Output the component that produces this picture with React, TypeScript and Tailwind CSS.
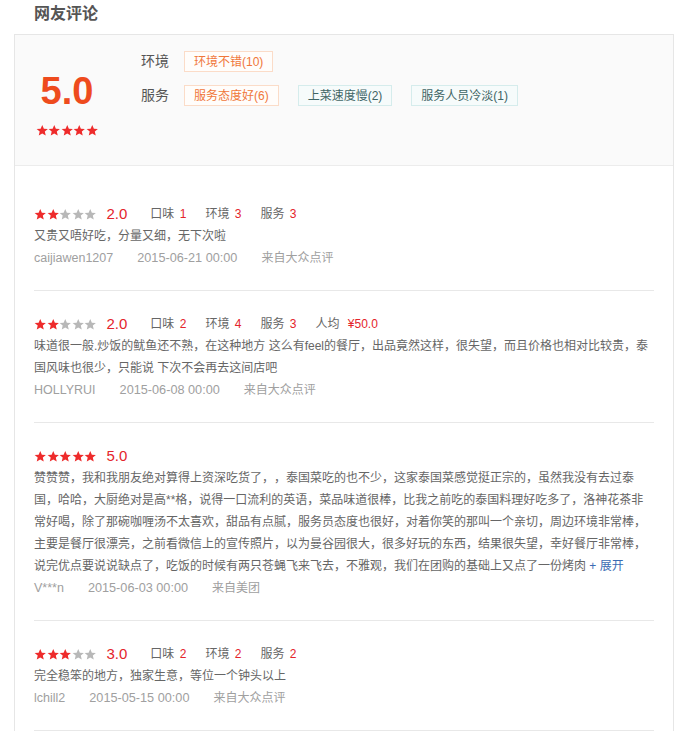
import React from 'react'

type Review = {
  stars: number
  scores: [string, string][]
  price?: string
  text: string
  user: string
  date: string
  source: string
  more?: boolean
}

const reviews: Review[] = [
  {
    stars: 2,
    scores: [['口味', '1'], ['环境', '3'], ['服务', '3']],
    text: '又贵又唔好吃，分量又细，无下次啦',
    user: 'caijiawen1207',
    date: '2015-06-21 00:00',
    source: '来自大众点评',
  },
  {
    stars: 2,
    scores: [['口味', '2'], ['环境', '4'], ['服务', '3']],
    price: '¥50.0',
    text: '味道很一般.炒饭的鱿鱼还不熟，在这种地方 这么有feel的餐厅，出品竟然这样，很失望，而且价格也相对比较贵，泰国风味也很少，只能说 下次不会再去这间店吧',
    user: 'HOLLYRUI',
    date: '2015-06-08 00:00',
    source: '来自大众点评',
  },
  {
    stars: 5,
    scores: [],
    text: '赞赞赞，我和我朋友绝对算得上资深吃货了，，泰国菜吃的也不少，这家泰国菜感觉挺正宗的，虽然我没有去过泰国，哈哈，大厨绝对是高**格，说得一口流利的英语，菜品味道很棒，比我之前吃的泰国料理好吃多了，洛神花茶非常好喝，除了那碗咖喱汤不太喜欢，甜品有点腻，服务员态度也很好，对着你笑的那叫一个亲切，周边环境非常棒，主要是餐厅很漂亮，之前看微信上的宣传照片，以为曼谷园很大，很多好玩的东西，结果很失望，幸好餐厅非常棒，说完优点要说说缺点了，吃饭的时候有两只苍蝇飞来飞去，不雅观，我们在团购的基础上又点了一份烤肉',
    user: 'V***n',
    date: '2015-06-03 00:00',
    source: '来自美团',
    more: true,
  },
  {
    stars: 3,
    scores: [['口味', '2'], ['环境', '2'], ['服务', '2']],
    text: '完全稳笨的地方，独家生意，等位一个钟头以上',
    user: 'lchill2',
    date: '2015-05-15 00:00',
    source: '来自大众点评',
  },
]

const Star = ({ on, size }: { on: boolean; size: number }) => (
  <svg width={size} height={size} viewBox="0 0 24 24" className="block">
    <path
      d="M12 1.8l3.1 7.1 7.7.6-5.9 5 1.8 7.6L12 18l-6.7 4.1 1.8-7.6-5.9-5 7.7-.6z"
      fill={on ? '#ee2b2b' : '#b8b8b8'}
    />
  </svg>
)

const Stars = ({ n, size }: { n: number; size: number }) => (
  <div className="flex">
    {[0, 1, 2, 3, 4].map((i) => (
      <Star key={i} on={i < n} size={size} />
    ))}
  </div>
)

const OrangeTag = ({ children }: { children: React.ReactNode }) => (
  <span className="inline-flex h-[21px] items-center border border-[#fbdcc8] bg-[#fffdfb] px-[9px] text-[12px] text-[#f0773a]">
    {children}
  </span>
)

const TealTag = ({ children }: { children: React.ReactNode }) => (
  <span className="inline-flex h-[21px] items-center border border-[#d5ecec] bg-[#f6fbfb] px-[9px] text-[12px] text-[#3f6565]">
    {children}
  </span>
)

export default function App() {
  return (
    <div
      className="min-h-[742px] bg-white [text-spacing-trim:space-all]"
      style={{ fontFamily: '"Liberation Sans", "Noto Sans CJK SC", sans-serif' }}
    >
      <h2 className="pl-[34px] pt-[4px] text-[16px] font-bold leading-[20px] text-[#555]">网友评论</h2>
      <div className="ml-[14px] mt-[10px] w-[660px] border-x border-t border-[#e6e6e6]">
        {/* summary */}
        <div className="flex h-[131px] border-b border-[#ececec] bg-[#fafafa]">
          <div className="flex w-[104px] flex-col items-center pt-[34px]">
            <div className="text-[38px] font-bold leading-[44px] text-[#ee4b1d]">5.0</div>
            <div className="mt-[11px]">
              <Stars n={5} size={12.5} />
            </div>
          </div>
          <div className="ml-[22px] flex flex-col gap-[13px] pt-[16px]">
            <div className="flex items-center">
              <span className="w-[43px] text-[14px] text-[#555]">环境</span>
              <OrangeTag>环境不错(10)</OrangeTag>
            </div>
            <div className="flex items-center">
              <span className="w-[43px] text-[14px] text-[#555]">服务</span>
              <div className="flex gap-[19px]">
                <OrangeTag>服务态度好(6)</OrangeTag>
                <TealTag>上菜速度慢(2)</TealTag>
                <TealTag>服务人员冷淡(1)</TealTag>
              </div>
            </div>
          </div>
        </div>

        {/* list */}
        <div className="pl-[19px] pt-[15px]">
          {reviews.map((r, i) => (
            <div key={i} className="w-[620px] border-b border-[#e8e8e8] pb-[21px] pt-[22px]">
              <div className="flex h-[22px] items-center text-[12px]">
                <Stars n={r.stars} size={12.5} />
                <span className="ml-[10px] text-[15px] text-[#e4242b]">{r.stars}.0</span>
                <div className="ml-[23px] flex gap-[19px] text-[#666]">
                  {r.scores.map(([k, v]) => (
                    <span key={k}>
                      {k} <span className="ml-[2px] text-[#e4242b]">{v}</span>
                    </span>
                  ))}
                  {r.price && (
                    <span>
                      人均 <span className="ml-[5px] text-[#e4242b]">{r.price}</span>
                    </span>
                  )}
                </div>
              </div>
              <p className="text-[12px] leading-[22px] text-[#666]">
                {r.text}
                {r.more && <span className="text-[#3b6bb3]"> + 展开</span>}
              </p>
              <div className="flex gap-[24px] text-[12px] leading-[22px] text-[#a0a0a0]">
                <span className="text-[12.5px]">{r.user}</span>
                <span className="text-[12.7px]">{r.date}</span>
                <span>{r.source}</span>
              </div>
            </div>
          ))}
        </div>
      </div>
    </div>
  )
}
